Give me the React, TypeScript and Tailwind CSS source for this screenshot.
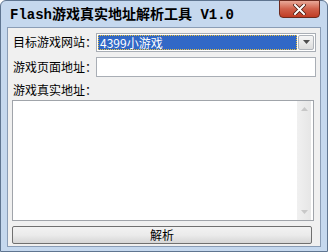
import React from "react";

const cjk = { fontFamily: '"Noto Sans CJK SC", "Liberation Sans", sans-serif' };

export default function App() {
  return (
    <div className="w-[328px] h-[252px] bg-white">
      <div className="w-[328px] h-[252px] rounded-t-[6px] border border-[#5f7590] bg-[#c5d8ee] flex flex-col">
        {/* title bar */}
        <div className="h-[27px] flex items-start relative">
          <div
            className="pl-[9px] pt-[6px] text-[14px] leading-[16px] font-bold text-black whitespace-nowrap"
            style={{ fontFamily: '"Liberation Mono", "Noto Sans CJK SC", monospace' }}
          >
            Flash游戏真实地址解析工具 V1.0
          </div>
          <div className="absolute right-[7px] top-[-1px] w-[41px] h-[18px] rounded-b-[4px] border border-[#6d2a1e] bg-gradient-to-b from-[#e8a898] via-[#d0604a] to-[#c03c24] flex items-center justify-center">
            <svg width="13" height="11" viewBox="0 0 13 11">
              <path d="M2 1 L11 10 M11 1 L2 10" stroke="#4a1a10" strokeWidth="3.6" strokeLinecap="square" />
              <path d="M2 1 L11 10 M11 1 L2 10" stroke="#ffffff" strokeWidth="2" strokeLinecap="square" />
            </svg>
          </div>
        </div>
        {/* client area */}
        <div className="mx-[6px] mb-[4px] flex-1 border border-[#8a9db6] bg-[#f0f0f0] flex flex-col px-[4px] pt-[4px] pb-[2px] text-[12px] text-black" style={cjk}>
          <div className="flex items-center h-[20px]">
            <div className="w-[84px] shrink-0 whitespace-nowrap leading-[14px] pl-[1px]">目标游戏网站：</div>
            <div className="flex-1 h-[19px] border border-[#a9aeb5] bg-white flex items-center p-[1px]">
              <div className="flex-1 h-[15px] bg-[#3168c6] border border-dotted border-[#e8c040] text-white leading-[13px] pl-[1px] whitespace-nowrap">4399小游戏</div>
              <div className="w-[16px] h-[15px] ml-[1px] border border-[#b0b4ba] bg-gradient-to-b from-[#f6f6f6] to-[#dcdcdc] rounded-[2px] flex items-center justify-center">
                <svg width="7" height="4" viewBox="0 0 7 4"><path d="M0 0 H7 L3.5 4 Z" fill="#4d4d4d" /></svg>
              </div>
            </div>
          </div>
          <div className="flex items-center h-[20px] mt-[5px]">
            <div className="w-[84px] shrink-0 whitespace-nowrap leading-[14px] pl-[1px]">游戏页面地址：</div>
            <div className="flex-1 h-[20px] border border-[#a9aeb5] bg-white" />
          </div>
          <div className="leading-[14px] mt-[6px] h-[17px] pl-[1px] whitespace-nowrap">游戏真实地址：</div>
          <div className="h-[121px] mr-[2px] border border-[#a0a4aa] bg-white flex justify-end">
            <div className="w-[14px] mr-[2px] bg-gradient-to-r from-[#f0f0f0] to-[#e6e6e6] flex flex-col justify-between items-center py-[6px]">
              <svg width="7" height="4" viewBox="0 0 7 4"><path d="M0 4 H7 L3.5 0 Z" fill="#c8c8c8" /></svg>
              <svg width="7" height="4" viewBox="0 0 7 4"><path d="M0 0 H7 L3.5 4 Z" fill="#c8c8c8" /></svg>
            </div>
          </div>
          <div className="h-[18px] mt-[5px] mr-[4px] border border-[#707070] rounded-[2px] bg-gradient-to-b from-[#f2f2f2] via-[#ebebeb] to-[#d6d6d6] flex items-center justify-center leading-[14px]">
            解析
          </div>
        </div>
      </div>
    </div>
  );
}
